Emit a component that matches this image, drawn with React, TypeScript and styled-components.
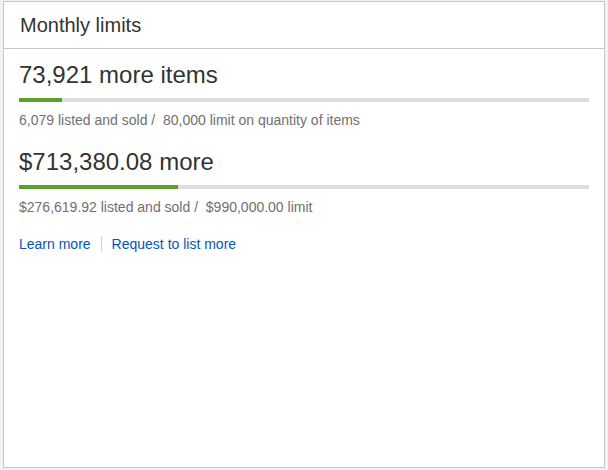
import React from "react";
import styled, { createGlobalStyle } from "styled-components";

const Global = createGlobalStyle`
  html, body { margin: 0; padding: 0; background: #f2f2f2; }
  body { font-family: "Liberation Sans", Arial, sans-serif; }
`;

const Page = styled.div`
  padding: 1px 3px 0 3px;
  width: 608px;
  height: 470px;
  box-sizing: border-box;
`;

const Card = styled.section`
  background: #fff;
  border: 1px solid #c7c7c7;
  width: 602px;
  height: 467px;
  box-sizing: border-box;
`;

const Header = styled.header`
  height: 47px;
  box-sizing: border-box;
  border-bottom: 1px solid #c7c7c7;
  padding: 0 16px;
  display: flex;
  align-items: center;
`;

const Title = styled.h2`
  margin: 0;
  font-size: 20px;
  font-weight: 400;
  color: #333;
`;

const Body = styled.div`
  padding: 12px 15px 0 15px;
`;

const Metric = styled.div`
  margin-bottom: 19px;
`;

const Headline = styled.div`
  font-size: 24px;
  line-height: 28px;
  color: #333;
`;

const Track = styled.div`
  height: 4px;
  background: #dddddd;
  margin-top: 9px;
`;

const Fill = styled.div`
  height: 100%;
  background: #5ba22b;
`;

const Detail = styled.div`
  margin-top: 9px;
  font-size: 14px;
  line-height: 18px;
  color: #707070;
`;

const Links = styled.div`
  display: flex;
  align-items: center;
  margin-top: 13px;
  font-size: 14px;
  line-height: 18px;
`;

const LinkA = styled.a`
  color: #0654ba;
  text-decoration: none;
`;

const Sep = styled.span`
  width: 1px;
  height: 16px;
  background: #d0d0d0;
  margin: 0 10px;
`;

const metrics = [
  { head: "73,921 more items", used: 6079, limit: 80000, detail: "6,079 listed and sold /\u00a0 80,000 limit on quantity of items" },
  { head: "$713,380.08 more", used: 276619.92, limit: 990000, detail: "$276,619.92 listed and sold /\u00a0 $990,000.00 limit" },
];

export default function App() {
  return (
    <>
      <Global />
      <Page>
        <Card>
          <Header>
            <Title>Monthly limits</Title>
          </Header>
          <Body>
            {metrics.map((m) => (
              <Metric key={m.head}>
                <Headline>{m.head}</Headline>
                <Track>
                  <Fill style={{ width: `${(m.used / m.limit) * 100}%` }} />
                </Track>
                <Detail>{m.detail}</Detail>
              </Metric>
            ))}
            <Links>
              <LinkA href="#">Learn more</LinkA>
              <Sep />
              <LinkA href="#">Request to list more</LinkA>
            </Links>
          </Body>
        </Card>
      </Page>
    </>
  );
}
